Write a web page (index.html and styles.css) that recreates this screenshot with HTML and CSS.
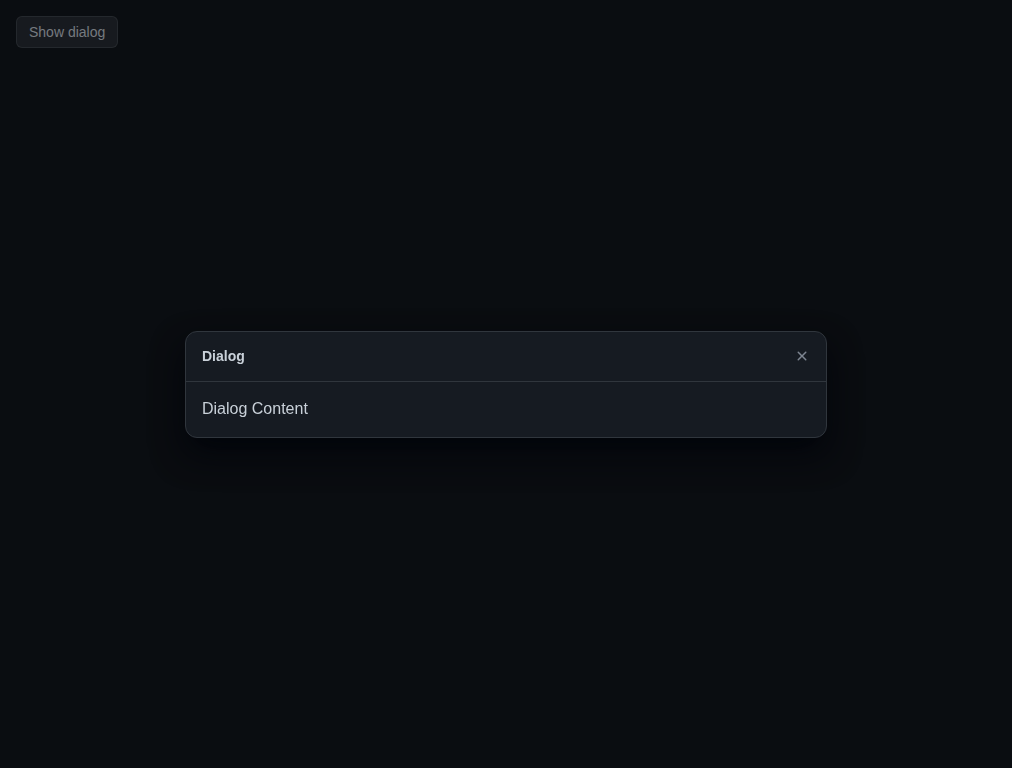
FILE: index.html
```html
<!DOCTYPE html>
<html lang="en">
<head>
<meta charset="utf-8">
<title>Dialog</title>
<link rel="stylesheet" href="styles.css">
</head>
<body>
<main class="page">
  <button class="btn" type="button">Show dialog</button>
</main>
<div class="backdrop">
  <div class="dialog" role="dialog" aria-labelledby="dlg-title">
    <header class="dialog-header">
      <h1 class="dialog-title" id="dlg-title">Dialog</h1>
      <button class="close" type="button" aria-label="Close">
        <svg width="16" height="16" viewBox="0 0 16 16" aria-hidden="true"><path fill="currentColor" d="M3.72 3.72a.75.75 0 0 1 1.06 0L8 6.94l3.22-3.22a.749.749 0 0 1 1.275.326.749.749 0 0 1-.215.734L9.06 8l3.22 3.22a.749.749 0 0 1-.326 1.275.749.749 0 0 1-.734-.215L8 9.06l-3.22 3.22a.751.751 0 0 1-1.042-.018.751.751 0 0 1-.018-1.042L6.94 8 3.72 4.78a.75.75 0 0 1 0-1.06Z"/></svg>
      </button>
    </header>
    <div class="dialog-body">Dialog Content</div>
  </div>
</div>
</body>
</html>
```
FILE: styles.css
```css
html, body {
  margin: 0;
  height: 100%;
}
body {
  background: #0d1117;
  color: #c9d1d9;
  font-family: "Liberation Sans", Arial, sans-serif;
  font-size: 14px;
}
.page {
  padding: 16px;
}
.btn {
  height: 32px;
  padding: 0 12px;
  border: 1px solid rgba(240, 246, 252, 0.1);
  border-radius: 6px;
  background: #21262d;
  color: #b1b8c0;
  font-family: inherit;
  font-size: 14px;
  line-height: 20px;
}
.backdrop {
  position: fixed;
  inset: 0;
  background: rgba(5, 5, 6, 0.35);
  display: flex;
  align-items: center;
  justify-content: center;
}
.dialog {
  width: 640px;
  background: #161b22;
  border: 1px solid #30363d;
  border-radius: 12px;
  box-shadow: 0 16px 32px rgba(1, 4, 9, 0.85);
  overflow: hidden;
}
.dialog-header {
  display: flex;
  align-items: center;
  height: 50px;
  box-sizing: border-box;
  padding: 0 8px 0 16px;
  border-bottom: 1px solid #30363d;
}
.dialog-title {
  flex: 1;
  margin: 0;
  font-size: 14px;
  font-weight: 700;
  line-height: 20px;
  color: #c9d1d9;
}
.close {
  width: 32px;
  height: 32px;
  display: flex;
  align-items: center;
  justify-content: center;
  padding: 0;
  border: 0;
  border-radius: 6px;
  background: transparent;
  color: #7d8590;
}
.dialog-body {
  padding: 15px 16px 16px;
  font-size: 16px;
  line-height: 24px;
  color: #c9d1d9;
}
```
